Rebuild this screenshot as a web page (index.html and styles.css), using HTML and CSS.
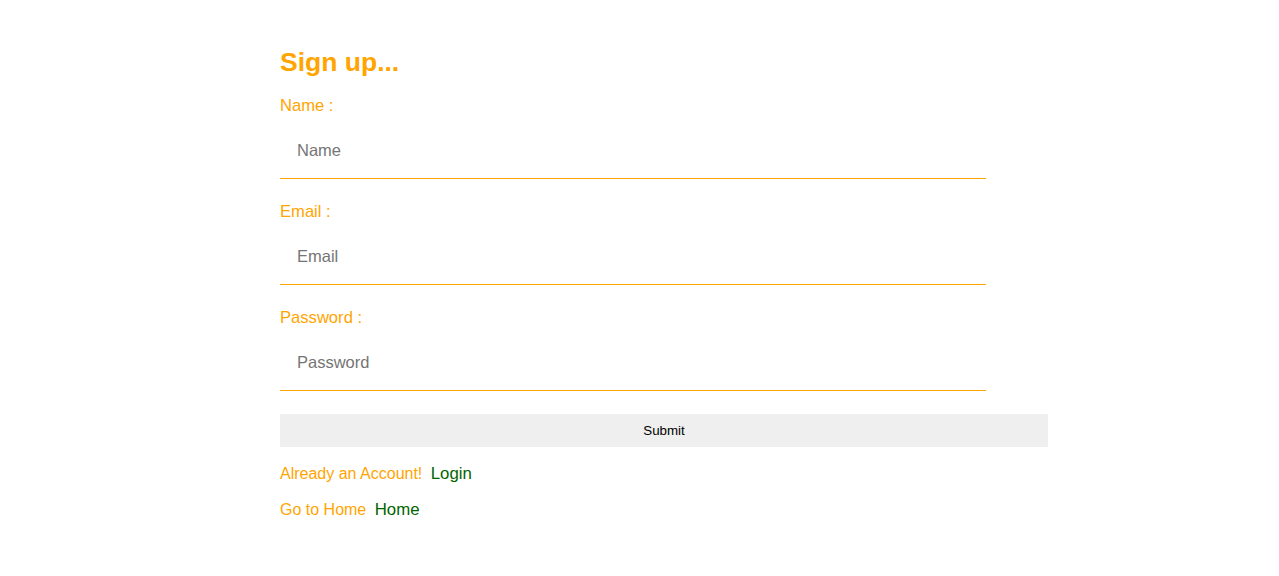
FILE: index.html
```html
<!DOCTYPE html>
<html lang="en">
<head>
<meta charset="utf-8">
<title>Sign up</title>
<link rel="stylesheet" href="styles.css">
</head>
<body>
<main class="page">
  <form class="signup">
    <h2 class="title">Sign up...</h2>
    <div class="field">
      <label class="label" for="name">Name :</label>
      <input class="input" id="name" type="text" placeholder="Name">
    </div>
    <div class="field">
      <label class="label" for="email">Email :</label>
      <input class="input" id="email" type="email" placeholder="Email">
    </div>
    <div class="field">
      <label class="label" for="password">Password :</label>
      <input class="input" id="password" type="password" placeholder="Password">
    </div>
    <button class="submit" type="button">Submit</button>
    <p class="line first">Already an Account! <a class="link" href="#">Login</a></p>
    <p class="line">Go to Home <a class="link" href="#">Home</a></p>
  </form>
</main>
</body>
</html>
```

FILE: styles.css
```css
html, body {
  margin: 0;
  padding: 0;
  background: #ffffff;
}

body {
  font-family: "Liberation Sans", Arial, sans-serif;
}

.page {
  padding-top: 47px;
  padding-left: 280px;
}

.signup {
  width: 768px;
  display: flex;
  flex-direction: column;
}

.title {
  margin: 0 0 19px;
  font-size: 26.5px;
  line-height: 30px;
  font-weight: bold;
  color: #ffa500;
}

.field {
  display: flex;
  flex-direction: column;
  margin-bottom: 23px;
}

.label {
  display: block;
  padding-top: 1px;
  font-size: 16.6px;
  line-height: 18px;
  color: #ffa500;
  margin-bottom: 7px;
}

.input {
  box-sizing: border-box;
  width: 706px;
  height: 57px;
  margin: 0;
  padding: 18px 17px;
  font-family: "Liberation Sans", Arial, sans-serif;
  font-size: 16.5px;
  line-height: 20px;
  color: #333;
  border: none;
  border-bottom: 1px solid #ffa500;
  outline: none;
  background: transparent;
}

.input::placeholder {
  color: #757575;
}

.submit {
  width: 768px;
  height: 33px;
  margin: 0;
  padding: 0;
  border: none;
  background: #efefef;
  font-family: "Liberation Sans", Arial, sans-serif;
  font-size: 13.333px;
  color: #000;
}

.line {
  margin: 18px 0 0;
  font-size: 16px;
  line-height: 18px;
  color: #ffa500;
}

.line.first {
  margin-top: 18px;
}

.link {
  margin-left: 4px;
  font-size: 16.8px;
  color: #006400;
  text-decoration: none;
}
```
